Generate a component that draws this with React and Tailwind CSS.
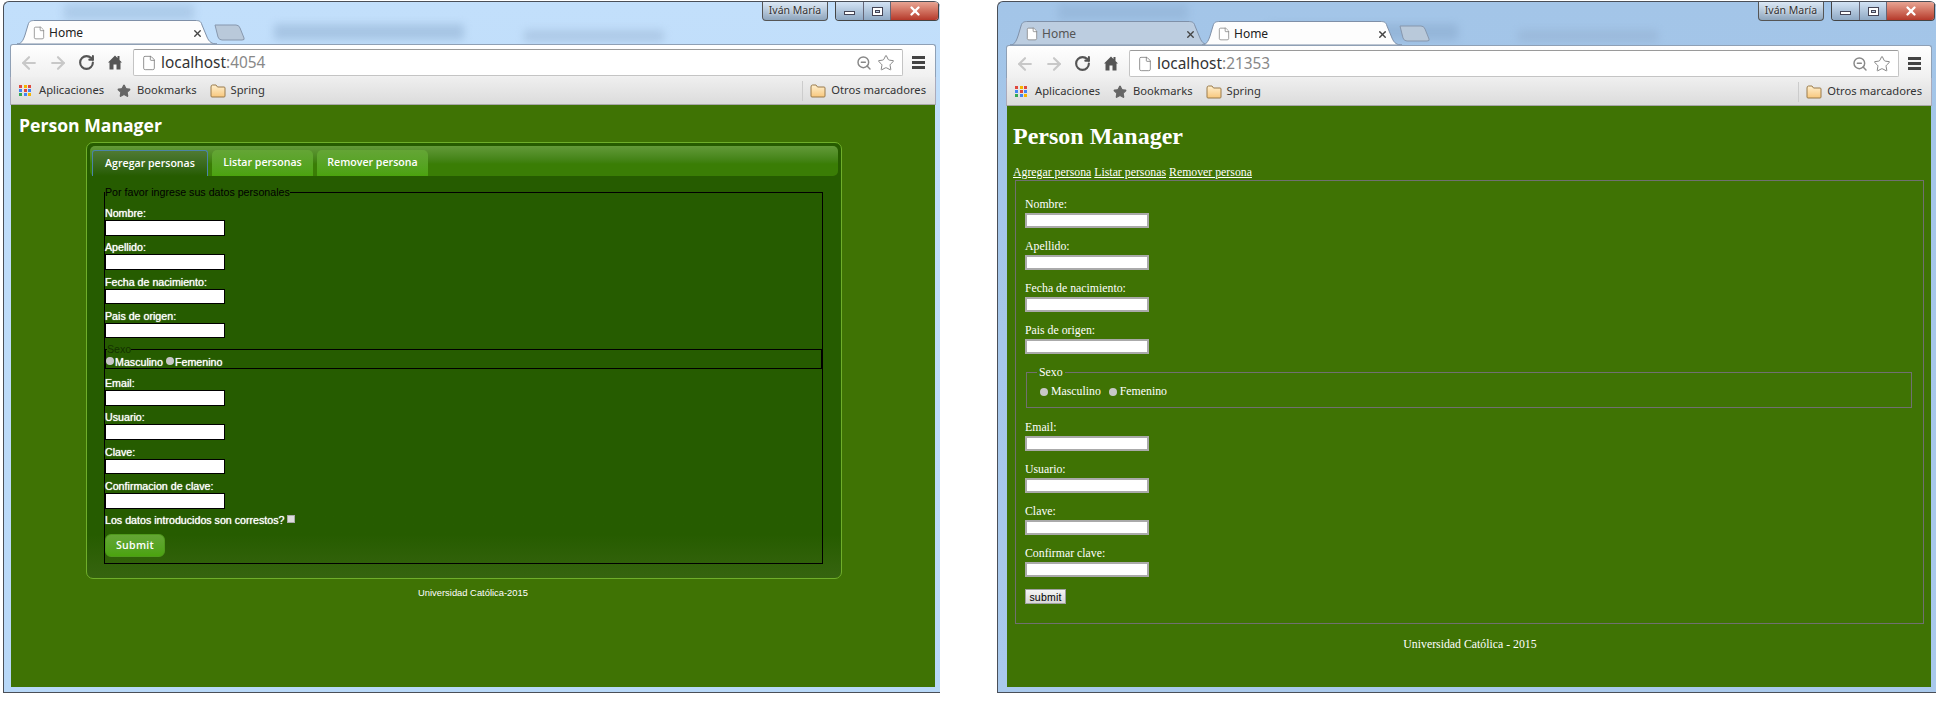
import { ArrowLeft, ArrowRight, RotateCw, File, ZoomOut, Star, X } from "lucide-react";

const appColors = ["#e0483e", "#f4b400", "#e0483e", "#4285f4", "#e0483e", "#4285f4", "#34a853", "#4285f4", "#f4b400"];

function FolderIcon() {
  return (
    <svg width="16" height="14" viewBox="0 0 16 14">
      <defs>
        <linearGradient id="folderFill" x1="0" y1="0" x2="0" y2="1">
          <stop offset="0" stopColor="#fff0cf" />
          <stop offset="1" stopColor="#f8c77c" />
        </linearGradient>
      </defs>
      <path d="M1 3 Q1 1 2.5 1 L6 1 L7.5 3 L14 3 Q15 3 15 4 L15 12 Q15 13 14 13 L2 13 Q1 13 1 12 Z" fill="url(#folderFill)" stroke="#9a7b4a" strokeWidth="1" />
    </svg>
  );
}

function HomeIcon() {
  return (
    <svg width="14" height="15" viewBox="0 0 14 15" fill="#555">
      <path d="M7 0.5 L9.5 3 L9.5 1 L11.5 1 L11.5 5 L14 7.5 L12.5 7.5 L12.5 14.5 L8.5 14.5 L8.5 9.5 L5.5 9.5 L5.5 14.5 L1.5 14.5 L1.5 7.5 L0 7.5 Z" />
    </svg>
  );
}

function Tab({ active, title }) {
  return (
    <div className={active ? "relative w-[200px] h-[24px] -mr-[8px] z-10" : "relative w-[200px] h-[24px] -mr-[8px]"}>
      <svg className="absolute inset-0" width="200" height="24" viewBox="0 0 200 24">
        <path
          d="M0 24 C4 24 6 21 8 15 L11 5 C12 1 14 0.5 18 0.5 L178 0.5 C182 0.5 184 1 185 5 L190 17 C192 22 195 24 200 24 Z"
          fill={active ? "#fdfdfd" : "#bccde0"}
          stroke="#7f90a8"
          strokeWidth="1"
        />
      </svg>
      <div className={active ? "relative flex items-center h-[24px] pt-[2px] pl-[15px] pr-[14px] text-[12px] text-[#222]" : "relative flex items-center h-[24px] pt-[2px] pl-[15px] pr-[14px] text-[12px] text-[#555]"}>
        <File size={14} strokeWidth={1.2} className="text-[#777] fill-white mr-[3px]" />
        <span className="flex-1">{title}</span>
        <X size={11} strokeWidth={3} className="text-[#444]" />
      </div>
    </div>
  );
}

function NewTab() {
  return (
    <svg className="mb-[3px] ml-[13px] -translate-x-[8px]" width="32" height="17" viewBox="0 0 32 17">
      <path d="M1 1 L22 1 Q25 1 26 4 L30 14 Q31 16 28 16 L8 16 Q5 16 4 13 Z" fill="#b9c9da" stroke="#8797ad" />
    </svg>
  );
}

function WindowButtons() {
  return (
    <div className="absolute top-0 right-[1px] flex gap-[7px]">
      <div className="w-[66px] h-[19px] rounded-b-[4px] border border-t-0 border-[#555] bg-linear-to-b from-[#dbe8f5] to-[#8fa6bd] flex items-center justify-center text-[10.5px] text-[#333] [text-shadow:0_0_3px_white]">
        Iván María
      </div>
      <div className="flex h-[19px] rounded-b-[4px] border border-t-0 border-[#444] overflow-hidden">
        <div className="w-[28px] border-r border-[#667] bg-linear-to-b from-[#d3e3f4] to-[#8fa9c4] flex items-center justify-center">
          <div className="w-[11px] h-[4px] mt-[4px] bg-white border border-[#445]" />
        </div>
        <div className="w-[27px] border-r border-[#667] bg-linear-to-b from-[#d3e3f4] to-[#8fa9c4] flex items-center justify-center">
          <div className="w-[11px] h-[9px] bg-white border border-[#445] flex items-center justify-center">
            <div className="w-[5px] h-[3px] bg-[#b9cbe0] border border-[#445]" />
          </div>
        </div>
        <div className="w-[47px] bg-linear-to-b from-[#e8a493] to-[#b5382a] flex items-center justify-center">
          <X size={14} strokeWidth={4} className="text-white" />
        </div>
      </div>
    </div>
  );
}

function BrowserWindow({ className, chromeClass, stripClass, port, tabs, children }) {
  return (
    <div className={"relative h-[692px] mt-[1px] rounded-t-[6px] border border-r-0 border-[#4a4f58] overflow-hidden font-['Noto_Sans',sans-serif] " + className}>
      {/* aero glass behind the chrome */}
      <div className="absolute left-[60px] top-[2px] w-[130px] h-[16px] bg-[#7f9fc2] opacity-30 blur-[4px]" />
      <div className="absolute left-[270px] top-[22px] w-[190px] h-[16px] bg-[#7f9fc2] opacity-40 blur-[4px]" />
      <div className="absolute left-[520px] top-[28px] w-[140px] h-[12px] bg-[#8fa9c8] opacity-40 blur-[4px]" />

      <WindowButtons />

      <div className={"relative flex flex-col h-[685px] w-[926px] " + chromeClass}>
        <div className={"flex items-end " + stripClass}>
          {tabs.map((t, i) => (
            <Tab key={i} title={t.title} active={t.active} />
          ))}
          <NewTab />
        </div>

        {/* toolbar */}
        <div className="flex items-center h-[33px] pt-[3px] pl-[8px] pr-[10px] rounded-t-[3px] border-x border-t border-[#8fa0b5] bg-linear-to-b from-white to-[#f0f0f0]">
          <ArrowLeft size={20} strokeWidth={2.6} className="text-[#c8c8c8] mr-[9px]" />
          <ArrowRight size={20} strokeWidth={2.6} className="text-[#c8c8c8] mr-[10px]" />
          <RotateCw size={17} strokeWidth={3} className="text-[#555] mr-[13px]" />
          <HomeIcon />
          <div className="flex items-center flex-1 h-[27px] ml-[11px] mr-[9px] px-[7px] bg-white border border-[#c4c4c4] border-t-[#9a9a9a] rounded-[2px]">
            <File size={16} strokeWidth={1.2} className="text-[#777] mr-[4px] shrink-0" />
            <span className="flex-1 text-[15.4px] leading-[20px] text-[#333]">
              localhost<span className="text-[#888]">:{port}</span>
            </span>
            <ZoomOut size={16} strokeWidth={2.2} className="text-[#888] mr-[5px]" />
            <Star size={18} strokeWidth={1.2} className="text-[#777] fill-white" />
          </div>
          <div className="flex flex-col gap-[2px] w-[13px]">
            <div className="h-[3px] bg-[#444]" />
            <div className="h-[3px] bg-[#444]" />
            <div className="h-[3px] bg-[#444]" />
          </div>
        </div>

        {/* bookmarks */}
        <div className="flex items-center h-[28px] pl-[8px] pr-[9px] border-x border-b border-x-[#aab] border-b-[#a8a8a8] bg-linear-to-b from-[#efefef] to-[#dcdcdc] text-[11.2px] text-[#333]">
          <div className="grid grid-cols-3 gap-[1px] w-[13px] mr-[7px]">
            {appColors.map((c, i) => (
              <div key={i} className="w-[3px] h-[3px]" style={{ backgroundColor: c }} />
            ))}
          </div>
          <span className="mr-[13px]">Aplicaciones</span>
          <Star size={14} className="text-[#666] fill-[#666] mr-[6px]" />
          <span className="mr-[13px]">Bookmarks</span>
          <FolderIcon />
          <span className="ml-[5px] flex-1">Spring</span>
          <div className="w-[1px] h-[20px] bg-[#ccc] mr-[7px]" />
          <FolderIcon />
          <span className="ml-[5px]">Otros marcadores</span>
        </div>

        <div className="flex-1 mx-[1px] bg-[#3f7304] text-white font-['Liberation_Sans',sans-serif] overflow-hidden">{children}</div>
      </div>
    </div>
  );
}

function ThemedField({ label }) {
  return (
    <div className="mb-[4.8px]">
      <label className="block h-[14px] leading-[14px] text-[10.67px] text-white [text-shadow:0_0_1px_white]">{label}</label>
      <input readOnly className="block w-[120px] h-[15.5px] bg-white border border-black" />
    </div>
  );
}

function ThemedPage() {
  const tabs = [
    { label: "Agregar personas", cls: "w-[116px] rounded-t-[3px] border border-b-0 border-[#4a84a8] bg-linear-to-b from-[#4f7a33] to-[#265c00]" },
    { label: "Listar personas", cls: "w-[101px] rounded-t-[5px] bg-linear-to-b from-[#64a535] to-[#4ba30d]" },
    { label: "Remover persona", cls: "w-[111px] rounded-t-[5px] bg-linear-to-b from-[#64a535] to-[#4ba30d]" },
  ];
  return (
    <div>
      <h1 className="pt-[8px] pl-[8px] mb-[5px] text-[17.6px] leading-[24px] font-bold font-['Open_Sans',sans-serif]">Person Manager</h1>

      <div className="ml-[75px] w-[756px] h-[437px] p-[3px] rounded-[7px] border border-[#6fae2a] bg-linear-to-b from-[#265c00] from-90% to-[#36640f]">
        <div className="flex items-end gap-[4px] h-[30px] pl-[2px] rounded-[5px] bg-linear-to-b from-[#639a38] to-[#3a7d05] to-60% font-['Open_Sans',sans-serif] text-[10.6px] font-semibold">
          {tabs.map((t) => (
            <div key={t.label} className={"flex items-center justify-center h-[26px] " + t.cls}>
              {t.label}
            </div>
          ))}
        </div>

        <fieldset className="mt-[10px] ml-[14px] mr-[15px] border border-black">
          <legend className="h-[13px] leading-[13px] text-[10.67px] text-black">Por favor ingrese sus datos personales</legend>
          <div className="pt-[7px]">
            <ThemedField label="Nombre:" />
            <ThemedField label="Apellido:" />
            <ThemedField label="Fecha de nacimiento:" />
            <ThemedField label="Pais de origen:" />
            <fieldset className="border border-black mb-[7px]">
              <legend className="h-[13px] leading-[13px] ml-[1px] text-[10.67px] text-[#143200]">Sexo</legend>
              <div className="flex items-center h-[12px] text-[10.67px] [text-shadow:0_0_1px_white]">
                <input type="radio" readOnly className="appearance-none w-[8px] h-[8px] rounded-full bg-[#c8c8c8] mb-[2px] mr-[1px]" />
                <span className="mr-[3px]">Masculino</span>
                <input type="radio" readOnly className="appearance-none w-[8px] h-[8px] rounded-full bg-[#c8c8c8] mb-[2px] mr-[1px]" />
                <span>Femenino</span>
              </div>
            </fieldset>
            <ThemedField label="Email:" />
            <ThemedField label="Usuario:" />
            <ThemedField label="Clave:" />
            <ThemedField label="Confirmacion de clave:" />
            <div className="flex items-center h-[14px] text-[10.67px] [text-shadow:0_0_1px_white]">
              <span>Los datos introducidos son correstos?</span>
              <input type="checkbox" readOnly className="appearance-none w-[8px] h-[8px] ml-[3px] mb-[2px] bg-[#ddd] border border-[#aaa]" />
            </div>
            <button className="block w-[60px] h-[23px] mt-[7px] mb-[6px] rounded-[6px] border border-[#4f9a1c] bg-linear-to-b from-[#64a535] to-[#4ba30d] text-[10.6px] font-semibold font-['Open_Sans',sans-serif] tracking-[0.3px]">
              Submit
            </button>
          </div>
        </fieldset>
      </div>

      <p className="mt-[7px] text-center text-[9.4px] leading-[14px]">Universidad Católica-2015</p>
    </div>
  );
}

function PlainField({ label }) {
  return (
    <div className="mb-[11px]">
      <label className="block h-[14px] leading-[14px] mb-[2px]">{label}</label>
      <input readOnly className="block w-[124px] h-[15px] bg-white border-2 border-[#aaaaaa]" />
    </div>
  );
}

function PlainPage() {
  return (
    <div className="font-['Liberation_Serif',serif] text-[11.8px]">
      <h1 className="pt-[16px] pl-[6px] mb-[15px] text-[24px] leading-[28px] font-bold">Person Manager</h1>
      <p className="pl-[6px] mb-[1px] h-[14px] leading-[14px] flex gap-[3px]">
        <a className="underline">Agregar persona</a>
        <a className="underline">Listar personas</a>
        <a className="underline">Remover persona</a>
      </p>
      <div className="ml-[8px] w-[909px] h-[444px] border border-[#707070] pt-[16px] pl-[9px]">
        <PlainField label="Nombre:" />
        <PlainField label="Apellido:" />
        <PlainField label="Fecha de nacimiento:" />
        <PlainField label="Pais de origen:" />
        <fieldset className="ml-[1px] w-[886px] h-[43px] mb-[12px] border border-[#707070] px-[10px]">
          <legend className="h-[14px] leading-[14px] px-[2px]">Sexo</legend>
          <div className="flex items-center h-[14px] mt-[6px]">
            <input type="radio" readOnly className="appearance-none w-[8px] h-[8px] ml-[3px] mr-[3px] rounded-full bg-[#c8c8c8]" />
            <span className="mr-[8px]">Masculino</span>
            <input type="radio" readOnly className="appearance-none w-[8px] h-[8px] mr-[3px] rounded-full bg-[#c8c8c8]" />
            <span>Femenino</span>
          </div>
        </fieldset>
        <PlainField label="Email:" />
        <PlainField label="Usuario:" />
        <PlainField label="Clave:" />
        <PlainField label="Confirmar clave:" />
        <button className="block w-[41px] h-[15px] mt-[12px] bg-linear-to-b from-[#f4f4f4] to-[#d8d8d8] border border-[#a0a0a0] text-[10.5px] leading-[12px] tracking-[0.2px] text-black font-['Liberation_Sans',sans-serif]">
          submit
        </button>
      </div>
      <p className="mt-[13px] pl-[2px] text-center h-[14px] leading-[14px]">Universidad Católica - 2015</p>
    </div>
  );
}

export default function App() {
  return (
    <div className="flex w-[1946px] h-[701px] pl-[3px] bg-white overflow-hidden">
      <BrowserWindow
        className="w-[937px] mr-[57px] bg-linear-to-b from-[#c2dffb] to-[#b8d8f8]"
        chromeClass="ml-[6px]"
        stripClass="h-[25px] mt-[17px] pl-[7px]"
        port="4054"
        tabs={[{ title: "Home", active: true }]}
      >
        <ThemedPage />
      </BrowserWindow>
      <BrowserWindow
        className="w-[939px] bg-linear-to-b from-[#a3c5e8] to-[#a9c9ec]"
        chromeClass="ml-[8px]"
        stripClass="h-[25px] mt-[18px] pl-[4px]"
        port="21353"
        tabs={[{ title: "Home" }, { title: "Home", active: true }]}
      >
        <PlainPage />
      </BrowserWindow>
    </div>
  );
}
